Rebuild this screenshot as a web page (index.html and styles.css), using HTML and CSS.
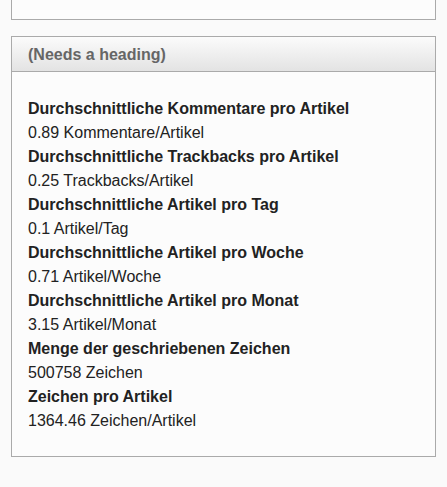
FILE: index.html
```html
<!DOCTYPE html>
<html>
<head>
<meta charset="utf-8">
<link rel="stylesheet" href="styles.css">
</head>
<body>
<div class="page">
  <div class="box box-top"></div>
  <div class="box">
    <div class="box-head">(Needs a heading)</div>
    <div class="box-body">
      <div class="label">Durchschnittliche Kommentare pro Artikel</div>
      <div class="value">0.89 Kommentare/Artikel</div>
      <div class="label">Durchschnittliche Trackbacks pro Artikel</div>
      <div class="value">0.25 Trackbacks/Artikel</div>
      <div class="label">Durchschnittliche Artikel pro Tag</div>
      <div class="value">0.1 Artikel/Tag</div>
      <div class="label">Durchschnittliche Artikel pro Woche</div>
      <div class="value">0.71 Artikel/Woche</div>
      <div class="label">Durchschnittliche Artikel pro Monat</div>
      <div class="value">3.15 Artikel/Monat</div>
      <div class="label">Menge der geschriebenen Zeichen</div>
      <div class="value">500758 Zeichen</div>
      <div class="label">Zeichen pro Artikel</div>
      <div class="value">1364.46 Zeichen/Artikel</div>
    </div>
  </div>
</div>
</body>
</html>
```

FILE: styles.css
```css
html, body {
  margin: 0;
  padding: 0;
  background: #fafafa;
}
body {
  font-family: "Liberation Sans", Arial, sans-serif;
  font-size: 16px;
  color: #222;
}
.page {
  padding-left: 11px;
  width: 425px;
}
.box {
  border: 1px solid #aaa;
  background: #fcfcfc;
}
.box-top {
  border-top: 0;
  height: 19px;
  margin-bottom: 16px;
}
.box-head {
  height: 33px;
  padding-top: 1px;
  line-height: 34px;
  padding-left: 16px;
  font-weight: bold;
  color: #666;
  background: linear-gradient(to bottom, #fbfbfb, #e3e3e3);
  border-bottom: 1px solid #aaa;
}
.box-body {
  padding: 25px 16px 23px;
  line-height: 24px;
}
.label {
  font-weight: bold;
}
```
